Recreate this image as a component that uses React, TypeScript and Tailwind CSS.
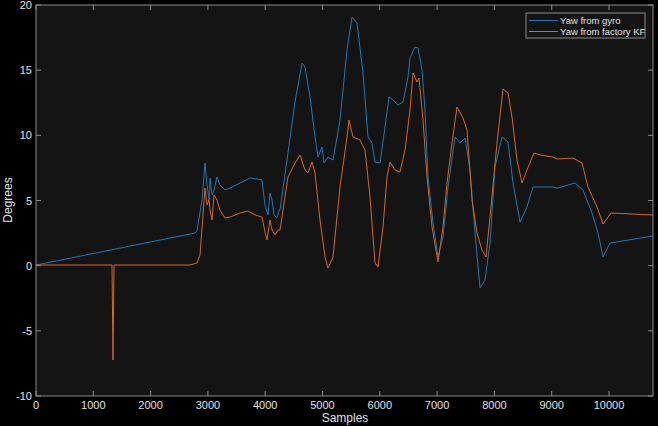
const blue = "36,265 195,233 197,231 202,200 205,163 207,185 209,200 210,178 212,195 214,190 217,177 220,185 225,190 230,188 240,183 250,178 257,179 262,180 265,205 268,215 270,193 272,200 274,215 277,218 279,210 280,210 287,160 295,102 302,63 305,67 310,97 315,137 318,157 322,147 324,163 328,157 333,160 340,120 347,50 352,17 357,23 363,73 368,137 372,143 375,162 380,163 385,127 389,97 393,100 398,105 403,102 408,77 410,58 415,47 418,48 422,70 425,110 428,177 433,223 438,257 443,237 448,187 455,137 460,143 465,138 470,170 475,233 480,288 485,280 490,243 495,167 502,137 508,142 513,183 520,222 527,207 533,187 553,187 558,188 575,183 583,190 592,213 598,233 603,257 610,243 653,236";
const orange = "36,265 112,265 113,360 114,265 190,265 197,263 200,255 203,215 205,188 207,205 209,200 210,210 212,220 214,195 217,200 220,210 225,218 230,217 240,213 248,211 255,215 262,217 265,232 267,240 270,220 272,230 275,235 278,230 280,230 288,177 295,163 300,155 305,170 308,173 312,162 315,173 320,220 325,257 328,268 333,257 340,187 347,137 349,120 353,137 360,140 365,150 370,197 375,263 378,267 383,227 387,177 390,162 395,170 400,172 405,150 410,110 413,73 417,82 419,78 423,120 427,177 432,227 438,262 443,227 447,183 452,143 457,107 463,118 467,130 472,200 477,233 482,250 486,257 490,217 497,143 503,89 508,93 512,117 517,160 522,183 527,170 534,153 540,155 553,157 557,159 573,158 582,163 588,187 597,207 603,224 611,213 653,215";

const L = 36, T = 5, R = 653, B = 396;
const yOf = (v: number) => T + (20 - v) * (391 / 30);
const xOf = (v: number) => L + v * 0.0573;

export default function App() {
  const yt = [20, 15, 10, 5, 0, -5, -10];
  const xt = [0, 1000, 2000, 3000, 4000, 5000, 6000, 7000, 8000, 9000, 10000];
  return (
    <div className="w-[658px] h-[426px] bg-black overflow-hidden" style={{ fontFamily: '"Liberation Sans", Arial, sans-serif' }}>
      <svg width="658" height="426" className="block">
        <rect x={L} y={T} width={R - L} height={B - T} fill="#141414" />
        <g fill="none" strokeWidth="1" strokeLinejoin="round">
          <polyline points={blue} stroke="#1f77b4" />
          <polyline points={orange} stroke="#d9661f" />
        </g>
        <rect x={L} y={T} width={R - L} height={B - T} fill="none" stroke="#8a8a8a" strokeWidth="1" />
        {yt.map((v) => (
          <g key={v}>
            <line x1={L} x2={L + 5} y1={yOf(v)} y2={yOf(v)} stroke="#8a8a8a" />
            <line x1={R - 5} x2={R} y1={yOf(v)} y2={yOf(v)} stroke="#8a8a8a" />
            <text x={32} y={yOf(v) + 4} textAnchor="end" fontSize="11" fill="#e0e0e0">{v}</text>
          </g>
        ))}
        {xt.map((v) => (
          <g key={v}>
            <line x1={xOf(v)} x2={xOf(v)} y1={B} y2={B - 5} stroke="#8a8a8a" />
            <line x1={xOf(v)} x2={xOf(v)} y1={T} y2={T + 5} stroke="#8a8a8a" />
            <text x={xOf(v)} y={409} textAnchor="middle" fontSize="11" fill="#e0e0e0">{v}</text>
          </g>
        ))}
        <text x={345} y={422} textAnchor="middle" fontSize="12" fill="#e0e0e0">Samples</text>
        <text transform="translate(12,200) rotate(-90)" textAnchor="middle" fontSize="12" fill="#e0e0e0">Degrees</text>
        <rect x={526} y={13} width={119} height={25} fill="#141414" stroke="#8a8a8a" />
        <line x1={529} x2={558} y1={20.5} y2={20.5} stroke="#1f77b4" />
        <line x1={529} x2={558} y1={31.5} y2={31.5} stroke="#d9661f" />
        <text x={560} y={24} fontSize="9.5" fill="#e0e0e0">Yaw from gyro</text>
        <text x={560} y={35} fontSize="9.5" fill="#e0e0e0">Yaw from factory KF</text>
      </svg>
    </div>
  );
}
